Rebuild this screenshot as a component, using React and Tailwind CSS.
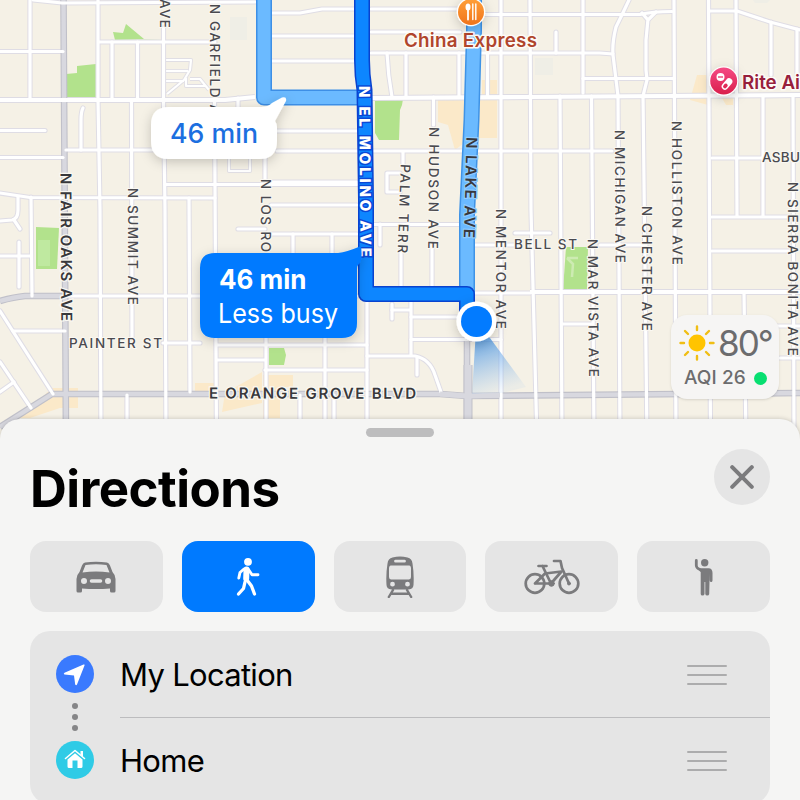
import React from 'react'

const FONT = 'font-["Inter","Liberation_Sans",sans-serif]'

const ROADS = [
  // west side
  'M30 0V98', 'M33 0L62 3L255 2', 'M0 51.5H63', 'M98 0L98 100L100 210L101 440',
  'M163.500 28V100L165 210L166 440', 'M99 42H215', 'M112 42V98', 'M137.500 42V98',
  'M0 130.500H45', 'M81 150V120Q81 112 83 108', 'M131.500 101L132 338', 'M66 150H160',
  'M0 157.500H63', 'M0 193Q20 196 30 197.500L215 198', 'M18 197V210Q18 219 12 220L0 221',
  'M14 220L20 229', 'M31 197L32 296', 'M19 242V287', 'M0 256H30', 'M165 184.500H357',
  'M214.500 100L216.500 440', 'M189 198L190 392', 'M238 98V107', 'M65 296H357', 'M13 331H65',
  'M0 311L53 394', 'M0 362L31 408', 'M0 392L14 382', 'M127 395V440', 'M163 343H200',
  // downtown
  'M265 155V180', 'M271 13H300L322 9H357', 'M271 36H357', 'M271 61H357', 'M277 131H357',
  'M277 151H612', 'M271 182H357', 'M271 205H357', 'M270 234H357', 'M293 234V253',
  'M332 234V253', 'M238 229H265', 'M371 9H460', 'M371 32H460', 'M371 53H600L613 54',
  'M387 53Q388 75 392 97', 'M406 53V97', 'M459 53V97', 'M433.500 97V125', 'M403 152V165',
  'M487.500 53V97', 'M485 14.500H640Q652 11.500 672 11.500', 'M501 0V440', 'M400 173H387V192H400',
  'M373 224.500H460', 'M380 224V245', 'M401 250V286', 'M432 245V286', 'M475 245H515', 'M475 293H530',
  'M515 233H550', 'M411 302V355', 'M411 317H460', 'M392 304V319', 'M392 310H410', 'M411 339.500H501',
  'M367 302V440', 'M367 356H415Q430 359 435 375L441 392', 'M417 358V375', 'M217 345H367',
  'M217 360H265', 'M265 370H367', 'M266 335V440', 'M325 338V440', 'M300 395V440', 'M334 395V440',
  // east side
  'M530 0L531 210L537 440', 'M583 0V93', 'M629 0Q622 15 616 27Q612 43 613 55L618 96L620 440',
  'M642 13L648 20L656 12M648 19L646 40V70L647 80L643 96L647 440', 'M674 0L676 440',
  'M708.500 0L710.500 440', 'M736 0L737 216', 'M710 11H737L770 22L800 30', 'M771 22V75',
  'M797 29V75', 'M556 32V53', 'M583 78.500H674', 'M560 96L562 440', 'M591.500 96L594 440',
  'M763 97V216', 'M793 97L794 440', 'M712 158H762', 'M712 217H790', 'M712 251H790',
  'M744 292L746 440', 'M562 324H592', 'M712 326H800', 'M780 358H800', 'M600 245H646',
]

const LANES = [
  'M165 60H191L190 70L184 80L167 94', 'M165 71H188', 'M165 81H184', 'M186 78V86H206',
  'M190 79H200L209 90', 'M229 157V171H250V157',
]

const MAJOR_ROADS = ['M0 100H225L255 97', 'M371 98L530 97L800 95', 'M530 292H800']

const HIGHWAYS = [
  'M63.500 0L64.500 170L66 440', 'M0 301Q14 297 25 296H64', 'M0 427L52 394H210L440 394L467 396L800 393',
  'M467 310V440',
]

const PARKS = [
  'M66 74L77 73V66L96 64V97H66Z', 'M113 32L123 33L126 24L144 39H162L115 40Z', 'M36 227L59 228L57 269H36Z',
  'M375 100L403 99L402 105L400 110L399 140H379L375 133Z', 'M566 247H588L587 291H563Z',
  'M269 348H284L286 355L284 365H269Z',
]

const SHOPS = [
  'M438 100H497V138H470L455 150L448 125L438 122Z', 'M482 80H497V97H482Z', 'M697 75H708V105L690 100Z',
  'M52 388H78V408H60L30 418H20Z', 'M195 383H215V395H195Z', 'M225 393L262 372V403L222 412Z',
  'M263 375H293V387H280V418H263Z', 'M722 98H733V105H726Z',
]

// drift tilts a label, in degrees
const STREETS = [
  { text: 'AVE', x: 165, y: -1, length: 29 },
  { text: 'N GARFIELD A', x: 215, y: 4, length: 110 },
  { text: 'N SUMMIT AVE', x: 133, y: 188, length: 117 },
  { text: 'N LOS RO', x: 266, y: 179, length: 73 },
  { text: 'PALM TERR', x: 405.5, y: 164, length: 89, drift: 2 },
  { text: 'N HUDSON AVE', x: 434, y: 127, length: 122, drift: 0.5 },
  { text: 'N MENTOR AVE', x: 500.5, y: 209, length: 120 },
  { text: 'N MAR VISTA AVE', x: 592.5, y: 239, length: 138, drift: -0.5 },
  { text: 'N MICHIGAN AVE', x: 619.5, y: 130, length: 133, drift: -0.3 },
  { text: 'N CHESTER AVE', x: 646.5, y: 206, length: 125 },
  { text: 'N HOLLISTON AVE', x: 676.5, y: 121, length: 144, drift: -0.3 },
  { text: 'N SIERRA BONITA AVE', x: 793, y: 182, length: 174 },
]

const StreetLabel = ({ text, x, y, length, drift = 0 }) => (
  <text
    transform={`translate(${x - 4.7} ${y}) rotate(${90 + drift})`}
    textLength={length}
    fontSize="13.5"
    fontWeight="450"
    fill="#4a4a4f"
    stroke="#faf8f2"
    strokeWidth="2"
    strokeLinejoin="round"
    paintOrder="stroke"
  >
    {text}
  </text>
)

const Roads = ({ paths, width, color, cap = 'butt' }) => (
  <g fill="none" stroke={color} strokeWidth={width} strokeLinejoin="round" strokeLinecap={cap}>
    {paths.map((d) => <path key={d} d={d} />)}
  </g>
)

const Route = ({ d, edge, fill, width = 16 }) => (
  <g fill="none" strokeLinejoin="round" strokeLinecap="round">
    <path d={d} stroke={edge} strokeWidth={width} />
    <path d={d} stroke={fill} strokeWidth={width - 3} />
  </g>
)

const MapCanvas = () => (
  <svg className={`block ${FONT}`} width="800" height="440" viewBox="0 0 800 440">
    <defs>
      <linearGradient id="beam" x1="478" y1="335" x2="496" y2="392" gradientUnits="userSpaceOnUse">
        <stop offset="0" stopColor="#3f8fe0" stopOpacity="0.85" />
        <stop offset="1" stopColor="#8fbdf0" stopOpacity="0.1" />
      </linearGradient>
      <linearGradient id="food" x1="0" y1="0" x2="0" y2="1">
        <stop offset="0" stopColor="#ff9f38" />
        <stop offset="1" stopColor="#f0741c" />
      </linearGradient>
      <linearGradient id="pharmacy" x1="0" y1="0" x2="0" y2="1">
        <stop offset="0" stopColor="#f54a84" />
        <stop offset="1" stopColor="#d91f4c" />
      </linearGradient>
      <filter id="shadow" x="-50%" y="-50%" width="200%" height="200%">
        <feDropShadow dx="0" dy="3" stdDeviation="6" floodOpacity="0.2" />
      </filter>
    </defs>

    <rect width="800" height="440" fill="#f5f1e6" />
    {SHOPS.map((d) => <path key={d} d={d} fill="#fbe9c9" />)}
    <path d="M230 17H247V40H230ZM535 58H553V75H535ZM753 0H770L767 3H755Z" fill="#efeee6" />
    {PARKS.map((d) => <path key={d} d={d} fill="#b2e28c" />)}
    <path d="M38 240H50V266H38Z" fill="#bfe9a0" />
    <path d="M567 258H578M567 258L573 264L572 277" stroke="#cdebb2" strokeWidth="2.500" fill="none" />

    <Roads paths={LANES} width="4" color="#e0dee4" />
    <Roads paths={LANES} width="2.2" color="#fff" />
    <Roads paths={ROADS} width="5.2" color="#dfdde5" cap="round" />
    <Roads paths={MAJOR_ROADS} width="6.2" color="#dedce4" />
    <Roads paths={HIGHWAYS} width="6.6" color="#c0c0c9" />
    <Roads paths={HIGHWAYS} width="4.4" color="#d8d8df" />
    <Roads paths={ROADS} width="3.2" color="#fff" cap="round" />
    <Roads paths={MAJOR_ROADS} width="4.2" color="#fff" />
    <path d="M468 365V440" stroke="#c0c0c9" strokeWidth="9" />
    <path d="M468 365V440" stroke="#d8d8df" strokeWidth="7" />
    <path d="M440 394L467 396L500 395" stroke="#d8d8df" strokeWidth="5" fill="none" />

    <Route d="M264 -10V97.500H364" edge="#3d8fe6" fill="#6bbaff" />
    <Route d="M474 -10V30L471.500 120L467 215V294" edge="#3f93e6" fill="#6bbaff" />
    <Route d="M362 -10V60Q362 75 364.500 90L366 200V294H467V316" edge="#0943cf" fill="#0d86ff" />

    {STREETS.map((street) => <StreetLabel key={street.text} {...street} />)}
    <g fontSize="13.5" fontWeight="450" fill="#4a4a4f" stroke="#faf8f2" strokeWidth="2" paintOrder="stroke">
      <text x="69" y="348" textLength="93">PAINTER ST</text>
      <text x="514" y="249" textLength="63">BELL ST</text>
      <text x="762" y="161.500" textLength="38">ASBU</text>
    </g>
    <g fontSize="15" fontWeight="600" fill="#38383c" stroke="#faf8f2" strokeWidth="2.5" paintOrder="stroke">
      <text transform="translate(60.500 173) rotate(89.7)" textLength="148">N FAIR OAKS AVE</text>
      <text transform="translate(209 398.500) rotate(0.1)" textLength="207">E ORANGE GROVE BLVD</text>
      <text transform="translate(466.500 137) rotate(91.5)" textLength="101" stroke="#8fcbff">N LAKE AVE</text>
    </g>
    <text transform="translate(359 86) rotate(89.5)" textLength="171" fontSize="15" fontWeight="800" fill="#fff" stroke="#0a48d6" strokeWidth="3" paintOrder="stroke">
      N EL MOLINO AVE
    </text>

    {/* heading beam and current position */}
    <path d="M476 330L490 338L526 387L502 393L472 394Z" fill="url(#beam)" />
    <circle cx="476.500" cy="321.500" r="20" fill="#fff" filter="url(#shadow)" />
    <circle cx="476.500" cy="321.500" r="15.500" fill="#027bff" />

    {/* points of interest */}
    <g fontSize="18.8" fontWeight="600" stroke="#fdfbf6" strokeWidth="3" strokeLinejoin="round" paintOrder="stroke">
      <text x="404" y="46.500" textLength="133" fill="#b0452c">China Express</text>
      <text x="742" y="88.500" textLength="58" lengthAdjust="spacingAndGlyphs" fill="#98203c">Rite Ai</text>
    </g>
    <circle cx="471" cy="12" r="14.200" fill="#fff" filter="url(#shadow)" />
    <circle cx="471" cy="12" r="13" fill="url(#food)" />
    <ellipse cx="468" cy="7" rx="2.500" ry="3.500" fill="#fff" />
    <path d="M468 9V19.500" stroke="#fff" strokeWidth="1.800" strokeLinecap="round" />
    <path d="M472.800 4V19.500M475.800 4V19.500" stroke="#fff" strokeWidth="1.400" strokeLinecap="round" />
    <circle cx="723.700" cy="81" r="14.500" fill="#fff" filter="url(#shadow)" />
    <circle cx="723.700" cy="81" r="13.500" fill="url(#pharmacy)" />
    <circle cx="720.500" cy="77" r="4" fill="#fff" />
    <path d="M718 77H723" stroke="#e83468" strokeWidth="1.300" />
    <g transform="rotate(-50 727 84)">
      <rect x="720.500" y="80.700" width="13" height="6.600" rx="3.300" fill="#fff" />
      <rect x="722" y="82.200" width="5" height="3.600" rx="1.600" fill="#e02a58" />
    </g>

    {/* route callouts */}
    <path d="M169 107H262Q268 107 272 103L282 97.500Q287 96 286 101L275 121Q277 124 277 127V141Q277 159 259 159H169Q151 159 151 141V125Q151 107 169 107Z" fill="#fff" filter="url(#shadow)" />
    <text x="170" y="142.500" textLength="88" lengthAdjust="spacingAndGlyphs" fontSize="27" fontWeight="500" fill="#1c6fe0">46 min</text>
    <path d="M215 253H338Q347 252 361 246Q363 262 358 265Q357 266 357 270V323Q357 338 342 338H215Q200 338 200 323V268Q200 253 215 253Z" fill="#007aff" filter="url(#shadow)" />
    <text x="219" y="288.500" textLength="87.500" lengthAdjust="spacingAndGlyphs" fontSize="27" fontWeight="650" fill="#fff">46 min</text>
    <text x="218" y="322.500" textLength="120" lengthAdjust="spacingAndGlyphs" fontSize="27" fill="#fff">Less busy</text>
  </svg>
)

const SunIcon = () => (
  <svg width="36" height="36" viewBox="0 0 36 36">
    <circle cx="18" cy="18" r="8.500" fill="#ffc400" />
    <path
      d="M18 1.500V5M18 31V34.500M1.500 18H5M31 18H34.500M6 6L9 9M27 27L30 30M30 6L27 9M9 27L6 30"
      stroke="#f0be14"
      strokeWidth="2.400"
      strokeLinecap="round"
    />
  </svg>
)

const Weather = () => (
  <div className="absolute left-[671px] top-[315px] w-[108px] h-[84px] rounded-2xl bg-[#f6f5f4] shadow-sm text-[#6c6c6e]">
    <div className="flex items-center pl-2 pt-2.5">
      <SunIcon />
      <span className="ml-[3px] text-[35px] leading-9 font-normal tracking-[-2px]">80°</span>
    </div>
    <div className="flex items-center pl-[13px] mt-[5px]">
      <span className="w-[70px] text-[19px] leading-6 font-medium tracking-[0.1px] whitespace-nowrap">AQI 26</span>
      <span className="w-[13px] h-[13px] rounded-full bg-[#08df71]" />
    </div>
  </div>
)

const CarIcon = () => (
  <svg width="40" height="32" viewBox="0 0 40 32">
    <path
      fillRule="evenodd"
      fill="#7b7b7d"
      d="M9 1.500Q20 -.2 31 1.500Q33 2 34 4.500L36.500 11Q39.500 14 39.500 18V30Q39.500 31.500 38 31.500H35.500Q34 31.500 34 30V27.500Q20 28.500 6 27.500V30Q6 31.500 4.500 31.500H2Q.5 31.500 .5 30V18Q.5 14 3.500 11L6 4.500Q7 2 9 1.500ZM9.500 4L6.500 11.500Q20 9.500 33.500 11.500L30.500 4Q20 2.500 9.500 4ZM8 17A3 3 0 1 0 8 23A3 3 0 1 0 8 17ZM32 17A3 3 0 1 0 32 23A3 3 0 1 0 32 17ZM15.500 18.200A1.800 1.800 0 0 0 15.500 21.800H24.500A1.800 1.800 0 0 0 24.500 18.200Z"
    />
  </svg>
)

const WalkIcon = () => (
  <svg width="24" height="40" viewBox="0 0 24 40" fill="none" stroke="#fff" strokeLinecap="round" strokeLinejoin="round">
    <circle cx="12" cy="4.800" r="3.900" fill="#fff" stroke="none" />
    <path d="M10.500 12.500L10.200 21.500" strokeWidth="6" />
    <path d="M8 12L4 15.500L2.800 21" strokeWidth="2.900" />
    <path d="M12.500 12.500L16 17.800H22" strokeWidth="2.900" />
    <path d="M11 23L15.500 29L18.500 37" strokeWidth="3.300" />
    <path d="M9 25L7.500 31.500L2.500 37" strokeWidth="3.300" />
  </svg>
)

const TrainIcon = () => (
  <svg width="28" height="42" viewBox="0 0 28 42" fill="none">
    <path
      fill="#7b7b7d"
      fillRule="evenodd"
      d="M6.500 1.500Q14 -.5 21.500 1.500Q26 2.500 26.500 7.500Q28.200 18 27.500 29Q27.300 33 22.500 33.500H5.500Q.7 33 .5 29Q-.2 18 1.500 7.500Q2 2.500 6.500 1.500ZM9.500 3.800A1.300 1.300 0 0 0 9.500 6.600H18.500A1.300 1.300 0 0 0 18.500 3.800ZM4.500 9.500Q3 10 3 12V21Q3 23 5 23.500H23Q25 23 25 21V12Q25 10 23.500 9.500ZM6.500 25.800A2.400 2.400 0 1 0 6.500 30.600A2.400 2.400 0 1 0 6.500 25.800ZM21.500 25.800A2.400 2.400 0 1 0 21.500 30.600A2.400 2.400 0 1 0 21.500 25.800Z"
    />
    <path d="M7 34L2.800 41M21 34L25.200 41M5 37.800H23" stroke="#7b7b7d" strokeWidth="2.400" strokeLinecap="round" />
  </svg>
)

const BikeIcon = () => (
  <svg width="56" height="36" viewBox="0 0 56 36" fill="none" stroke="#7b7b7d" strokeWidth="2.700" strokeLinecap="round" strokeLinejoin="round">
    <circle cx="11" cy="24.500" r="9.300" />
    <circle cx="45" cy="24.500" r="9.300" />
    <path d="M11 24.500L21 14.500L37.500 12.500L27 24.500H11" />
    <path d="M18.500 7L27 24.500M14.500 7H22.500M30 2H36.500L38 9L45 24.500" />
    <circle cx="27.500" cy="24.500" r="2.800" fill="#7b7b7d" strokeWidth="1" />
    <circle cx="45" cy="24.500" r="1.500" fill="#7b7b7d" strokeWidth="1" />
  </svg>
)

const HailIcon = () => (
  <svg width="20" height="38" viewBox="0 0 20 38" fill="none" stroke="#7b7b7d" strokeLinecap="round" strokeLinejoin="round">
    <circle cx="10.700" cy="4.800" r="3.700" fill="#7b7b7d" stroke="none" />
    <path d="M2.300 2.500V7.500Q2.500 10 5 11L7 12.500" strokeWidth="2.800" />
    <path d="M5.500 10.300H14.500Q18.500 10.500 18.500 15V22.500Q18.300 24 17.200 24Q15.900 24 15.700 22.500V16L15.200 36Q15 37.500 13.200 37.500Q11.500 37.500 11.300 36V24H10.500V36Q10.300 37.500 8.500 37.500Q6.700 37.500 6.700 36V14Z" fill="#7b7b7d" stroke="none" />
  </svg>
)

const MODES = [
  { name: 'Drive', Icon: CarIcon },
  { name: 'Walk', Icon: WalkIcon, active: true },
  { name: 'Transit', Icon: TrainIcon },
  { name: 'Cycle', Icon: BikeIcon },
  { name: 'Ride', Icon: HailIcon },
]

const DragHandle = () => (
  <div className="flex flex-col gap-[7px] mr-[43px]">
    <span className="w-10 h-0.5 rounded-full bg-[#acacad]" />
    <span className="w-10 h-0.5 rounded-full bg-[#acacad]" />
    <span className="w-10 h-0.5 rounded-full bg-[#acacad]" />
  </div>
)

const LocationIcon = () => (
  <svg width="38" height="38" viewBox="0 0 38 38">
    <circle cx="19" cy="19" r="19" fill="#3a7afe" />
    <path d="M27.500 9.500Q29 9 28.500 10.500L21 29.500Q20.200 31 19.200 29.500L18 20.500L8.500 19.500Q7 18.800 8.500 17.800Z" fill="#fff" />
  </svg>
)

const HomeIcon = () => (
  <svg width="38" height="38" viewBox="0 0 38 38">
    <circle cx="19" cy="19" r="19" fill="#2fcbe6" />
    <path d="M9.500 17.500L19 9.500L28.500 17.500" stroke="#fff" strokeWidth="1.600" fill="none" strokeLinecap="round" strokeLinejoin="round" />
    <path d="M24.500 10H27V16L24.500 14Z" fill="#fff" />
    <path d="M19 12.200L26.500 18.500V25.500Q26.500 27 25 27H21.500V19.500H16.500V27H13Q11.500 27 11.500 25.500V18.500Z" fill="#fff" />
  </svg>
)

const Sheet = () => (
  <section className="relative -mt-[21px] h-[381px] rounded-t-[20px] bg-[#f5f5f4] px-[30px] pt-[9px] shadow-[0_0_5px_rgba(0,0,0,0.2)]">
    <div className="mx-auto w-[68px] h-[9px] rounded-full bg-[#bdbdbe]" />
    <div className="flex justify-between items-start pt-3 h-[104px]">
      <h1 className="mt-[10px] text-[51px] leading-[60px] font-bold tracking-[-0.5px] text-black">Directions</h1>
      <button className="flex items-center justify-center w-14 h-14 rounded-full bg-[#e5e5e5]" aria-label="Close">
        <svg width="24" height="24" viewBox="0 0 24 24">
          <path d="M2.200 2.200L21.800 21.800M21.800 2.200L2.200 21.800" stroke="#7b7b7d" strokeWidth="4" strokeLinecap="round" />
        </svg>
      </button>
    </div>

    <div className="grid grid-cols-5 gap-[19px]">
      {MODES.map(({ name, Icon, active }) => (
        <button
          key={name}
          aria-label={name}
          className={`flex items-center justify-center h-[71px] rounded-2xl ${active ? 'bg-[#007aff]' : 'bg-[#e5e5e5]'}`}
        >
          <Icon />
        </button>
      ))}
    </div>

    <div className="flex mt-[19px] h-[173px] rounded-[20px] bg-[#e5e5e5]">
      <div className="flex flex-col items-center w-[90px] pt-6">
        <LocationIcon />
        <div className="flex flex-col gap-[5px] my-[10px]">
          <span className="w-1.5 h-1.5 rounded-full bg-[#858587]" />
          <span className="w-1.5 h-1.5 rounded-full bg-[#858587]" />
          <span className="w-1.5 h-1.5 rounded-full bg-[#858587]" />
        </div>
        <HomeIcon />
      </div>
      <div className="flex-1 text-[31px] tracking-[-0.7px] text-black">
        <div className="flex items-center justify-between h-[87px] pt-px border-b border-[#bcbcbe]">
          <span className="pt-px">My Location</span>
          <DragHandle />
        </div>
        <div className="flex items-center justify-between h-[86px]">
          <span className="pt-px">Home</span>
          <DragHandle />
        </div>
      </div>
    </div>
  </section>
)

export default function App() {
  return (
    <main className={`w-[800px] h-[800px] overflow-hidden bg-[#f5f5f4] ${FONT}`}>
      <div className="relative h-[440px]">
        <MapCanvas />
        <Weather />
      </div>
      <Sheet />
    </main>
  )
}
